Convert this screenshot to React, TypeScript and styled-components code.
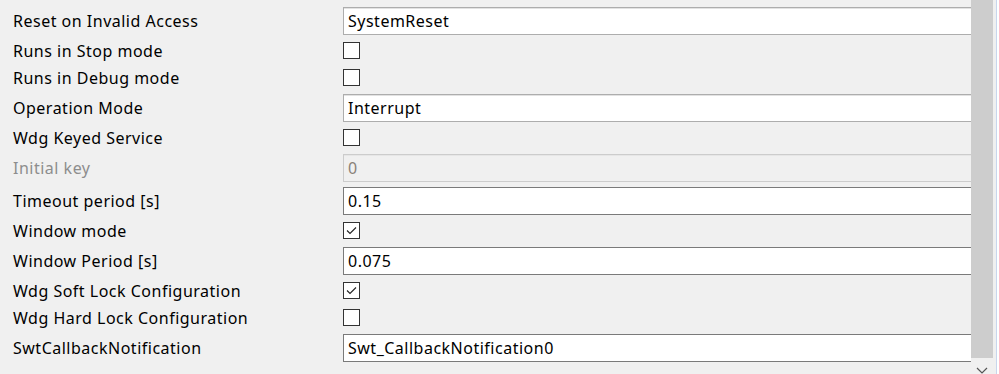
import React from 'react';
import styled, { createGlobalStyle, css } from 'styled-components';

const GlobalStyle = createGlobalStyle`
  html, body {
    margin: 0;
    padding: 0;
    background: #f0f0f0;
  }
  body {
    font-family: "Noto Sans", "Noto Sans CJK SC", sans-serif;
  }
`;

type Kind = 'combo' | 'text' | 'disabled' | 'check';

interface IParam {
  label: string;
  kind: Kind;
  value?: string;
  checked?: boolean;
}

const params: IParam[] = [
  { label: 'Reset on Invalid Access', kind: 'combo', value: 'SystemReset' },
  { label: 'Runs in Stop mode', kind: 'check', checked: false },
  { label: 'Runs in Debug mode', kind: 'check', checked: false },
  { label: 'Operation Mode', kind: 'combo', value: 'Interrupt' },
  { label: 'Wdg Keyed Service', kind: 'check', checked: false },
  { label: 'Initial key', kind: 'disabled', value: '0' },
  { label: 'Timeout period [s]', kind: 'text', value: '0.15' },
  { label: 'Window mode', kind: 'check', checked: true },
  { label: 'Window Period [s]', kind: 'text', value: '0.075' },
  { label: 'Wdg Soft Lock Configuration', kind: 'check', checked: true },
  { label: 'Wdg Hard Lock Configuration', kind: 'check', checked: false },
  { label: 'SwtCallbackNotification', kind: 'text', value: 'Swt_CallbackNotification0' },
];

const CheckMark = () => (
  <svg width="15" height="15" viewBox="0 0 15 15">
    <path d="M3 7.5 L6 10.5 L12 4.5" fill="none" stroke="#222" strokeWidth="1.1" />
  </svg>
);

const App: React.FC = () => {
  return (
    <>
      <GlobalStyle />
      <Window>
        <Panel>
          {params.map((p) => (
            <Row key={p.label} $tall={p.kind !== 'check'}>
              <Label $disabled={p.kind === 'disabled'}>{p.label}</Label>
              <Value>
                {p.kind === 'check' ? (
                  <CheckBox>{p.checked && <CheckMark />}</CheckBox>
                ) : (
                  <Field $kind={p.kind}>{p.value}</Field>
                )}
              </Value>
            </Row>
          ))}
        </Panel>
        <ScrollBar>
          <Thumb />
          <ArrowArea>
            <svg width="14" height="8" viewBox="0 0 14 8">
              <path d="M2 2 L7 7 L12 2" fill="none" stroke="#555" strokeWidth="1.2" />
            </svg>
          </ArrowArea>
        </ScrollBar>
        <Edge />
      </Window>
    </>
  );
};

const Window = styled.div`
  display: flex;
  width: 999px;
  height: 374px;
  overflow: hidden;
  background: #f0f0f0;
`;

const Panel = styled.div`
  display: flex;
  flex-direction: column;
  width: 971px;
  padding-top: 4px;
  overflow: hidden;
`;

const Row = styled.div<{ $tall: boolean }>`
  display: grid;
  grid-template-columns: 343px 1fr;
  align-items: center;
  height: ${({ $tall }) => ($tall ? '33px' : '27px')};
  flex-shrink: 0;
`;

const Label = styled.div<{ $disabled: boolean }>`
  padding-left: 13px;
  font-size: 16px;
  letter-spacing: 0.5px;
  color: ${({ $disabled }) => ($disabled ? '#8d8d8d' : '#000')};
  white-space: nowrap;
`;

const Value = styled.div`
  display: flex;
  align-items: center;
  height: 100%;
`;

const fieldKinds = {
  combo: css`
    background: #fff;
    border: 1px solid #adadad;
    box-shadow: inset 0 1px 0 #e2e2e2;
    color: #000;
  `,
  text: css`
    background: #fff;
    border: 1px solid #7a7a7a;
    color: #000;
  `,
  disabled: css`
    background: #f0f0f0;
    border: 1px solid #cccccc;
    box-shadow: inset 0 1px 0 #e6e6e6;
    color: #8a8278;
  `,
};

const Field = styled.div<{ $kind: 'combo' | 'text' | 'disabled' }>`
  box-sizing: border-box;
  flex: 1;
  height: 28px;
  margin-top: 1px;
  padding-left: 4px;
  display: flex;
  align-items: center;
  border-right: none !important;
  font-size: 16px;
  letter-spacing: 0.5px;
  white-space: nowrap;
  ${({ $kind }) => fieldKinds[$kind]}
`;

const CheckBox = styled.div`
  box-sizing: border-box;
  width: 17px;
  height: 17px;
  border: 1px solid #333;
  background: #fff;
  display: flex;
  align-items: center;
  justify-content: center;
`;

const ScrollBar = styled.div`
  display: flex;
  flex-direction: column;
  width: 22px;
  flex-shrink: 0;
`;

const Thumb = styled.div`
  height: 363px;
  background: #cdcdcd;
`;

const ArrowArea = styled.div`
  flex: 1;
  display: flex;
  justify-content: center;
  align-items: flex-start;
  padding-top: 8px;
  background: #f0f0f0;
`;

const Edge = styled.div`
  width: 6px;
  flex-shrink: 0;
  background: linear-gradient(to right, #f0f0f0 0, #f0f0f0 3px, #c9d6ec 3px, #c9d6ec 4px, #fff 4px);
`;

export default App;
